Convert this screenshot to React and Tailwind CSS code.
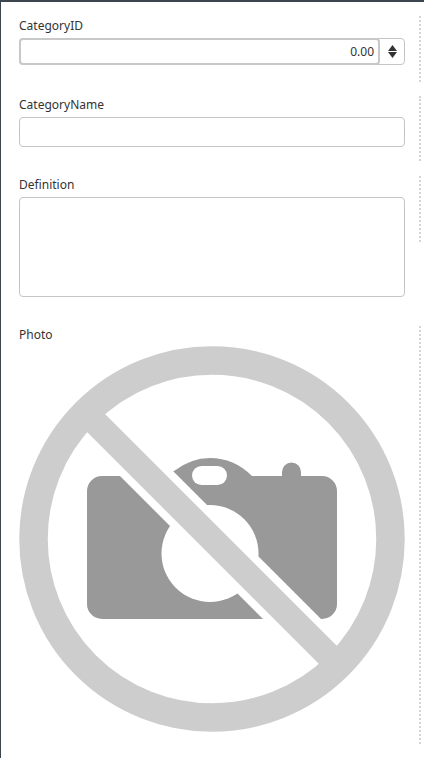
import React from "react";

const Label = ({children, height = "h-[21px]"}) => (
    <div className={`${height} text-[12px] leading-[18px] text-[#333]`}>{children}</div>
);

const NoPhoto = () => (
    <svg width="386" height="386" viewBox="0 0 386 386" className="block">
        <path
            fill="#999"
            d="M83 130H120L155 125Q172 112 191 112Q215 112 233 130H263V126A9.5 9.5 0 0 1 282 126V130H303A15 15 0 0 1 318 145V258A15 15 0 0 1 303 273H83A15 15 0 0 1 68 258V145A15 15 0 0 1 83 130Z"
        />
        <circle cx="191" cy="207.5" r="48.5" fill="#fff"/>
        <rect x="173" y="120" width="35" height="19" rx="9.5" fill="#fff"/>
        <line x1="60" y1="60" x2="326" y2="326" stroke="#fff" strokeWidth="41"/>
        <line x1="67" y1="67" x2="319" y2="319" stroke="#cdcdcd" strokeWidth="25.5"/>
        <circle cx="193" cy="193" r="178.5" fill="none" stroke="#cdcdcd" strokeWidth="28.5"/>
    </svg>
);

const Spinner = () => (
    <div className="w-[25px] pl-px flex items-center justify-center">
        <svg width="9" height="13" viewBox="0 0 9 13">
            <path fill="#333" d="M4.5 0L9 6H0Z"/>
            <path fill="#333" d="M0 7H9L4.5 13Z"/>
        </svg>
    </div>
);

export default function App() {
    return (
        <div
            className="w-[424px] h-[758px] overflow-hidden bg-white border-t-2 border-l border-[#3c4550] pt-[14px] pr-[3px]"
            style={{fontFamily: '"Noto Sans", sans-serif'}}
        >
            <section className="h-[66px] pl-[18px] pr-[14px] border-r-2 border-dotted border-[#d4d4d4]">
                <Label height="h-[22px] pt-px">CategoryID</Label>
                <div className="h-[27px] flex rounded-[4px] border border-[#c4c4c4] bg-white">
                    <div className="flex-1 -m-px rounded-[4px] border-2 border-[#c8c8c8] flex items-center justify-end pr-[4px] text-[12px] text-[#333]">
                        0.00
                    </div>
                    <Spinner/>
                </div>
            </section>

            <section className="mt-[14px] h-[65px] pl-[18px] pr-[14px] border-r-2 border-dotted border-[#d4d4d4]">
                <Label>CategoryName</Label>
                <div className="h-[30px] rounded-[4px] border border-[#c4c4c4]"/>
            </section>

            <section className="mt-[15px] h-[66px] pl-[18px] pr-[14px] border-r-2 border-dotted border-[#d4d4d4]">
                <Label>Definition</Label>
                <div className="h-[100px] rounded-[4px] border border-[#c4c4c4]"/>
            </section>

            <section className="mt-[84px] h-[418px] pl-[18px] pr-[14px] border-r-2 border-dotted border-[#d4d4d4]">
                <Label height="h-[20px]">Photo</Label>
                <NoPhoto/>
            </section>
        </div>
    );
}
